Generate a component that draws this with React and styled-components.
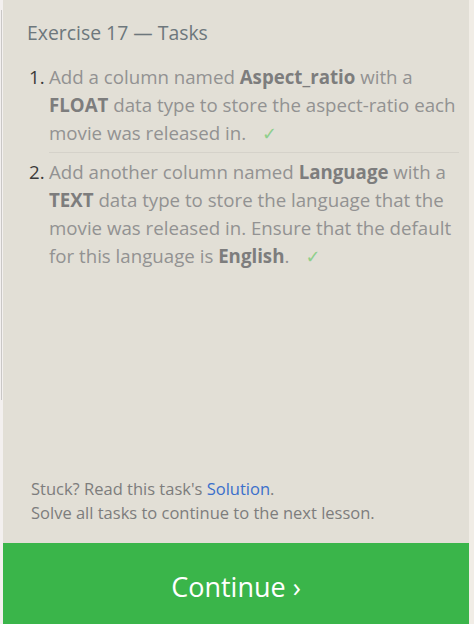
import React from 'react';
import styled, { createGlobalStyle } from 'styled-components';

const GlobalStyle = createGlobalStyle`
  html, body {
    margin: 0;
    padding: 0;
    background: #f2efea;
  }
  body {
    font-family: "Open Sans", "Noto Sans", sans-serif;
  }
`;

const tasks = [
  {
    id: 1,
    parts: [
      'Add a column named ',
      { b: 'Aspect_ratio' },
      ' with a ',
      { b: 'FLOAT' },
      ' data type to store the aspect-ratio each movie was released in.',
    ],
  },
  {
    id: 2,
    parts: [
      'Add another column named ',
      { b: 'Language' },
      ' with a ',
      { b: 'TEXT' },
      ' data type to store the language that the movie was released in. Ensure that the default for this language is ',
      { b: 'English' },
      '.',
    ],
  },
];

const App = () => {
  return (
    <>
      <GlobalStyle />
      <Page>
        <LeftEdge />
        <Panel>
          <Content>
            <Heading>Exercise 17 — Tasks</Heading>
            <TaskList>
              {tasks.map((task, i) => (
                <Task key={task.id} $last={i === tasks.length - 1}>
                  <Num>{task.id}.</Num>
                  <TaskText>
                    {task.parts.map((p, j) =>
                      typeof p === 'string' ? p : <strong key={j}>{p.b}</strong>
                    )}
                    <Check>✓</Check>
                  </TaskText>
                </Task>
              ))}
            </TaskList>
          </Content>
          <Footer>
            <p>
              Stuck? Read this task's <a href="#">Solution</a>.
            </p>
            <p>Solve all tasks to continue to the next lesson.</p>
          </Footer>
          <ContinueButton>Continue ›</ContinueButton>
        </Panel>
        <RightEdge />
      </Page>
    </>
  );
};

const Page = styled.div`
  display: flex;
  width: 474px;
  height: 624px;
  overflow: hidden;
`;

const LeftEdge = styled.div`
  width: 3px;
  flex-shrink: 0;
  background:
    linear-gradient(to right, transparent 1px, #c9c7c6 1px, #c9c7c6 2px, transparent 2px) 0 10px / 3px 390px no-repeat,
    #f3f0ef;
`;

const RightEdge = styled.div`
  width: 5px;
  flex-shrink: 0;
  background: #f1ede6;
`;

const Panel = styled.div`
  flex: 1;
  display: flex;
  flex-direction: column;
  background: #e2dfd6;
`;

const Content = styled.div`
  flex: 1;
  padding: 19px 4px 0 24px;
`;

const Heading = styled.h2`
  margin: 0 0 16px;
  font-size: 19.4px;
  font-weight: 400;
  line-height: 28px;
  color: #6d777c;
`;

const TaskList = styled.ol`
  list-style: none;
  margin: 0;
  padding: 0;
`;

const Task = styled.li`
  display: flex;
  padding: 0 0 ${(p) => (p.$last ? '0' : '4px')};
  margin-bottom: 5px;
  margin-right: ${(p) => (p.$last ? '0' : '6px')};
  border-bottom: ${(p) => (p.$last ? 'none' : '1px solid #d5d2ca')};
  margin-left: 22px;
  position: relative;
  font-size: 18.7px;
  line-height: 28px;
  color: #929292;

  strong {
    font-weight: 700;
    color: #7d7d7d;
  }
`;

const Num = styled.span`
  position: absolute;
  left: -20px;
  top: 0;
  color: #3a3a3a;
`;

const TaskText = styled.div`
  flex: 1;
`;

const Check = styled.span`
  margin-left: 16px;
  color: #8fcf8c;
  font-family: "DejaVu Sans", sans-serif;
  font-size: 18px;
`;

const Footer = styled.div`
  padding: 0 20px 18px 28px;
  font-size: 16.5px;
  line-height: 24px;
  color: #7d7d7d;

  p {
    margin: 0;
  }

  a {
    color: #3b6fcb;
    text-decoration: none;
  }
`;

const ContinueButton = styled.button`
  height: 81px;
  border: none;
  background: #3ab54a;
  color: #ffffff;
  font-family: "Open Sans", "Noto Sans", sans-serif;
  font-size: 27px;
  cursor: pointer;
  padding: 6px 0 0;
`;

export default App;
